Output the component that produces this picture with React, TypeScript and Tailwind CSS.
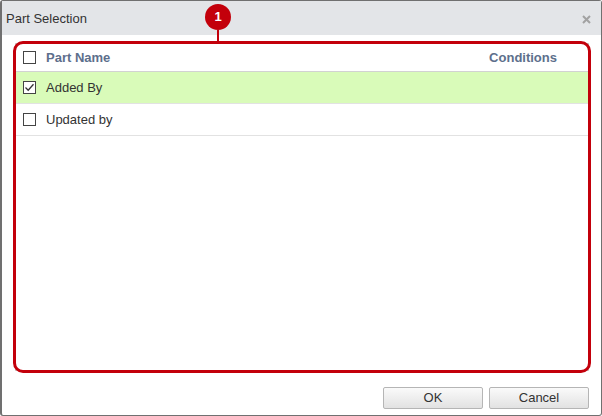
const ROWS = [
  { name: "Added By", checked: true },
  { name: "Updated by", checked: false },
];

function Box({ checked }: { checked?: boolean }) {
  return (
    <span className="flex h-[13px] w-[13px] items-center justify-center border border-[#444] bg-white">
      {checked && (
        <svg width="11" height="11" viewBox="0 0 11 11">
          <path d="M1.5 5.5 L4.2 8.2 L9.5 2.2" fill="none" stroke="#333" strokeWidth="1.3" />
        </svg>
      )}
    </span>
  );
}

export default function App() {
  return (
    <div className="h-[416px] w-[602px] bg-white font-['Liberation_Sans',Arial,sans-serif] text-[13px] text-[#333]">
      <div className="flex h-full flex-col rounded-[3px] border border-l-2 border-[#707070] bg-white">
        <div className="relative flex h-[34px] items-center justify-between bg-[#e3e5e8] pl-[4px] pr-[10px]">
          <span className="pt-[1px] text-[13px] text-[#333]">Part Selection</span>
          <svg width="9" height="9" viewBox="0 0 9 9" className="mt-[2px]">
            <path d="M1 1 L8 8 M8 1 L1 8" stroke="#a2a2a2" strokeWidth="2" />
          </svg>
          {/* callout */}
          <div className="absolute left-[203px] top-[3px] flex flex-col items-center">
            <div className="flex h-[26px] w-[26px] items-center justify-center rounded-full bg-[#c3000b] text-[13px] font-bold text-white">
              1
            </div>
            <div className="h-[14px] w-[2px] bg-[#c3000b]" />
          </div>
        </div>

        <div className="flex flex-1 flex-col pl-[13px] pr-[12px] pt-[8px]">
          <div className="relative h-[328px] border border-[#cfcfcf]">
            <div className="flex h-[28px] items-center border-b border-[#d2d2d2] pl-[7px] pr-[31px] font-bold text-[#5d6f8c]">
              <Box />
              <span className="ml-[10px] flex-1">Part Name</span>
              <span>Conditions</span>
            </div>
            {ROWS.map((r) => (
              <div
                key={r.name}
                className={`flex h-[32px] items-center border-b border-[#e2e2e2] pl-[7px] ${r.checked ? "bg-[#d9fbb9]" : "bg-white"}`}
              >
                <Box checked={r.checked} />
                <span className="ml-[10px]">{r.name}</span>
              </div>
            ))}
            <div className="pointer-events-none absolute inset-[-3px] rounded-[10px] border-[3px] border-[#c3000b]" />
          </div>

          <div className="mt-[16px] flex justify-end gap-[6px]">
            <button className="h-[22px] w-[100px] rounded-[2px] border border-[#b5b5b5] bg-gradient-to-b from-[#fafafa] to-[#e2e2e2] text-[13px] text-[#333]">
              OK
            </button>
            <button className="h-[22px] w-[100px] rounded-[2px] border border-[#b5b5b5] bg-gradient-to-b from-[#fafafa] to-[#e2e2e2] text-[13px] text-[#333]">
              Cancel
            </button>
          </div>
        </div>
      </div>
    </div>
  );
}
